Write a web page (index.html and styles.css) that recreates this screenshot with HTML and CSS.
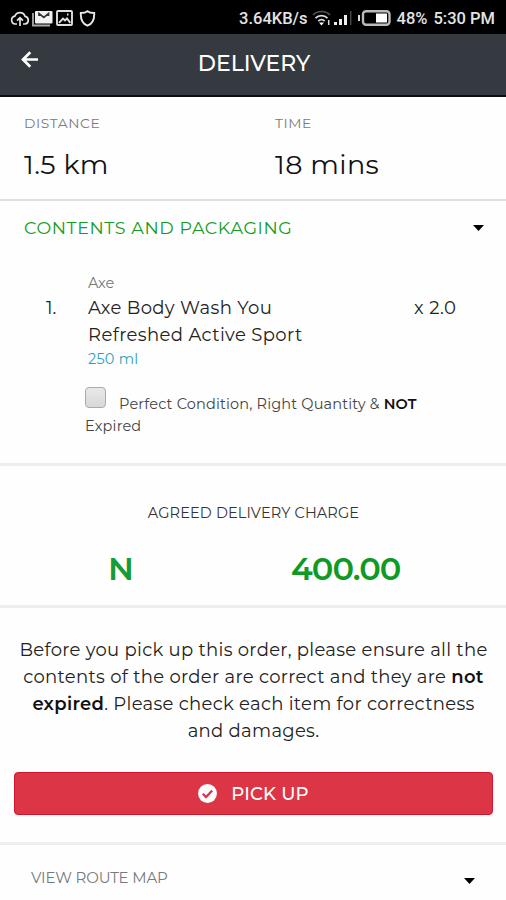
FILE: index.html
```html
<!DOCTYPE html>
<html lang="en">
<head>
<meta charset="utf-8">
<title>Delivery</title>
<link rel="stylesheet" href="styles.css">
</head>
<body>
<div class="status">
  <div class="notices">
    <svg width="20" height="17" viewBox="0 0 20 17" fill="none" stroke="#e4e4e4" stroke-width="1.7"><path d="M7 14H5.200a4 4 0 0 1-.3-7.900A5.400 5.400 0 0 1 15 6.300a3.900 3.900 0 0 1 0 7.700h-2M10 16V8M7 10.700l3-3 3 3"/></svg>
    <svg width="21" height="17" viewBox="0 0 21 17"><path d="M1 3v12.500h17" fill="none" stroke="#aaa" stroke-width="1.800"/><rect x="3" y="1" width="17.500" height="12.500" rx="1" fill="#f2f2f2"/><path d="M7 6V3.500l4.800 3.800L16.500 3.500V6" fill="none" stroke="#333" stroke-width="1.700"/></svg>
    <svg class="photo" width="17" height="17" viewBox="0 0 17 17" fill="none" stroke="#dedede" stroke-width="1.900"><rect x="1" y="1" width="15" height="14" rx="1"/><path d="M3 12.800 7 8.500l2 2 2-2 3.300 4.300"/><path d="M11 4.500h1.500" stroke-width="2"/></svg>
    <svg class="shield" width="17" height="17" viewBox="0 0 17 17" fill="none" stroke="#e8e8e8" stroke-width="1.900"><path d="M8.500 1.200C6.500 2.800 4 3 1.800 3c-.3 6.500 1.700 10.800 6.700 12.700 5-1.900 7-6.200 6.700-12.700-2.200 0-4.700-.2-6.700-1.800z"/></svg>
  </div>
  <div class="system">
    <span class="speed">3.64KB/s</span>
    <svg class="wifi" width="19" height="16" viewBox="0 0 19 16" fill="none"><path d="M1 5a12 12 0 0 1 17 0" stroke="#555" stroke-width="1.600"/><path d="M3.500 8.200a8.500 8.500 0 0 1 12 0M6.300 11a5 5 0 0 1 6.400 0" stroke="#ddd" stroke-width="1.800"/><path d="m7 12.500 2.500 3 2.500-3z" fill="#fff"/><path d="M16.700 10v5" stroke="#ddd" stroke-width="1.500"/></svg>
    <svg class="bars" width="18" height="16" viewBox="0 0 18 16"><path d="M0 12h3v3H0zM5 9h3v6H5zM10 5h3v10h-3z" fill="#eee"/><path d="M16 1h1.500v14H16z" fill="#444"/></svg>
    <svg class="battery" width="33" height="16" viewBox="0 0 33 16"><path d="M0 5h2v6H0z" fill="#ddd"/><rect x="5" y="1.200" width="26.500" height="13.600" rx="3" fill="#000" stroke="#bbb" stroke-width="2.400"/><path d="M18 3.500h11v9H18z" fill="#fff"/></svg>
    <span class="percent">48%</span>
    <span class="clock">5:30 PM</span>
  </div>
</div>
<header class="top">
  <svg class="back" width="17" height="17" viewBox="0 0 17 17" fill="none" stroke="#fff" stroke-width="2.700"><path d="M9.300 1.200 2 8.500l7.300 7.300M2 8.500h15"/></svg>
  <h1>DELIVERY</h1>
</header>
<section class="facts">
  <div><div class="label">DISTANCE</div><div class="value">1.5 km</div></div>
  <div><div class="label">TIME</div><div class="value">18 mins</div></div>
</section>
<section class="contents">
  <div class="contents-head"><h2>CONTENTS AND PACKAGING</h2><svg width="11" height="6" viewBox="0 0 11 6"><path d="M0 0h11L5.500 6z"/></svg></div>
  <div class="item">
    <div class="number">1.</div>
    <div class="details">
      <div class="brand">Axe</div>
      <div class="name">Axe Body Wash You<br>Refreshed Active Sport</div>
      <div class="size">250 ml</div>
    </div>
    <div class="qty">x 2.0</div>
  </div>
  <div class="check"><span class="box"></span>Perfect Condition, Right Quantity &amp; <b>NOT</b><br>Expired</div>
</section>
<section class="charge">
  <h3>AGREED DELIVERY CHARGE</h3>
  <div class="amount"><span class="naira">N</span><span class="sum">400.00</span></div>
</section>
<section class="confirm">
  <p>Before you pick up this order, please ensure all the<br>contents of the order are correct and they are <b>not</b><br><b>expired</b>. Please check each item for correctness<br>and damages.</p>
  <div class="pickup"><svg width="19" height="19" viewBox="0 0 19 19"><circle cx="9.500" cy="9.500" r="9.400" fill="#fff"/><path d="m4.800 9.800 3.200 3.200 6.200-6.500" fill="none" stroke="#dc3545" stroke-width="2.300"/></svg><span>PICK UP</span></div>
</section>
<section class="route"><span>VIEW ROUTE MAP</span><svg width="11" height="6" viewBox="0 0 11 6"><path d="M0 0h11L5.500 6z"/></svg></section>
</body>
</html>
```

FILE: styles.css
```css
* { box-sizing: border-box; }
body { margin: 0; width: 506px; height: 900px; overflow: hidden; background: #fefefe; color: #222; font-family: Montserrat, Inter, sans-serif; white-space: nowrap; }
h1, h2, h3, p { margin: 0; font-weight: 400; }
svg { display: block; flex: none; }
b { font-weight: 600; color: #111; }
.status { height: 34px; background: #000; color: #e4e4e4; display: flex; justify-content: space-between; align-items: center; padding: 2px 11px 0 10px; font: 500 16.500px/20px Roboto, sans-serif; }
.notices, .system { display: flex; align-items: center; }
.notices { gap: 2px; }
.notices .photo { margin-left: 1px; }
.notices .shield { margin-left: 4px; }
.speed, .percent, .clock { padding-top: 1px; }
.wifi { margin-left: 4px; }
.bars { margin-left: 3px; }
.battery { margin-left: 6px; }
.percent { margin-left: 6px; }
.clock { margin-left: 6px; }
.top { height: 63px; background: #343a40; border-bottom: 2px solid #0b0e12; color: #fff; display: grid; grid-template-columns: 81px 1fr 79px; padding-top: 15px; }
.back { margin: 2px 0 0 21px; }
h1 { font-size: 22px; line-height: 30px; text-align: center; font-weight: 500; }
.facts { height: 104px; border-bottom: 2px solid #dfdfdf; padding: 17px 24px 0; display: grid; grid-template-columns: 251px 1fr; }
.label { font-size: 13.800px; line-height: 18px; color: #777b80; letter-spacing: .6px; }
.value { font-size: 27px; line-height: 36px; margin-top: 15px; color: #111; letter-spacing: .4px; }
.contents { height: 265px; border-bottom: 3px solid #eee; }
.contents-head { display: flex; justify-content: space-between; align-items: center; height: 54px; padding: 0 22px 0 24px; }
h2 { font-size: 17.500px; color: #159c22; letter-spacing: .6px; padding-bottom: 2px; }
.item { display: grid; grid-template-columns: 42px 326px 1fr; padding: 19px 0 0 46px; font-size: 18px; line-height: 27px; }
.number { padding-top: 21px; }
.qty { padding-top: 21px; letter-spacing: .4px; }
.brand { font-size: 14.500px; line-height: 18px; color: #777; }
.name { margin-top: 3px; letter-spacing: .38px; }
.size { margin-top: -1px; font-size: 14.500px; line-height: 22px; letter-spacing: .2px; color: #2fa1bd; }
.check { margin: 17px 0 0 85px; font-size: 14.500px; line-height: 22px; letter-spacing: .17px; color: #444; }
.box { display: inline-block; width: 21px; height: 21px; margin-right: 13px; vertical-align: 1px; border: 1.500px solid #aaa; border-radius: 4px; background: linear-gradient(#e9e9e9, #d8d8d8); }
.charge { height: 142px; border-bottom: 3px solid #eee; padding-top: 37px; }
h3 { text-align: center; font-size: 14.500px; line-height: 20px; letter-spacing: .14px; color: #333; padding-left: 1px; }
.amount { display: grid; grid-template-columns: 183px 1fr; padding: 26px 0 0 108px; font-size: 32px; line-height: 40px; font-weight: 600; color: #159c35; }
.sum { letter-spacing: -.9px; color: #0f9a26; }
.confirm { height: 237px; border-bottom: 3px solid #eee; padding: 29px 13px 0 14px; }
.confirm p { text-align: center; font-size: 18px; line-height: 27px; letter-spacing: .3px; }
.pickup { height: 43px; margin-top: 27px; border: 1.500px solid #d3152b; border-radius: 4px; background: #dc3545; color: #fff; display: flex; justify-content: center; align-items: center; gap: 14px; font-size: 18px; font-weight: 500; letter-spacing: .2px; }
.route { height: 66px; padding: 0 31px 2px; display: flex; justify-content: space-between; align-items: center; color: #777b80; font-size: 15px; letter-spacing: -.15px; }
.route svg { fill: #000; margin-top: 7px; }
```
